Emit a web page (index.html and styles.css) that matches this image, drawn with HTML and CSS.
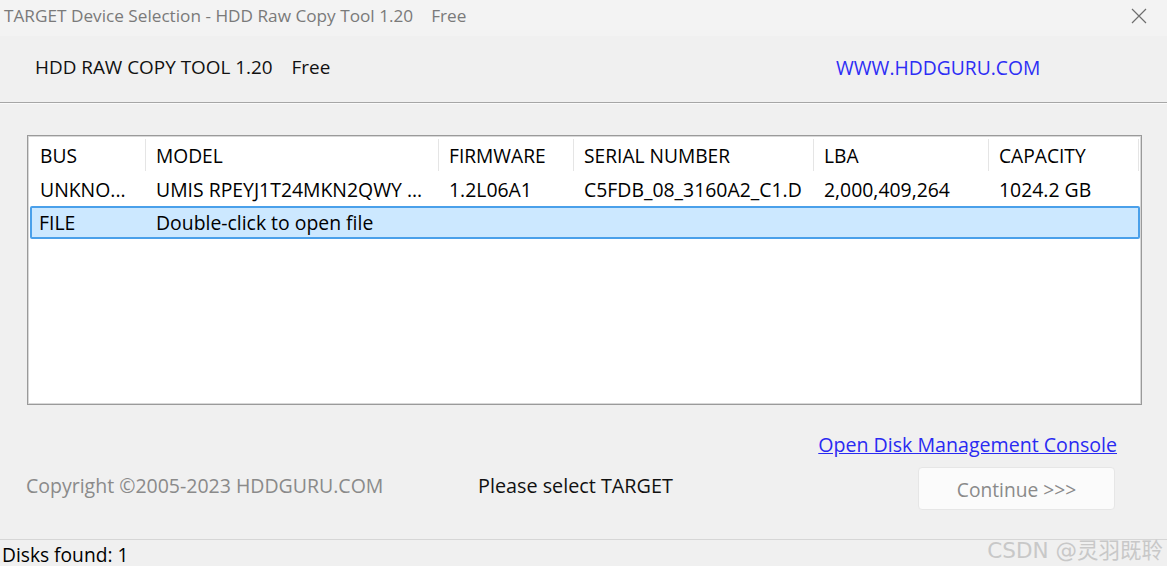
FILE: index.html
```html
<!DOCTYPE html>
<html>
<head>
<meta charset="utf-8">
<link rel="stylesheet" href="styles.css">
</head>
<body>
<div class="window">
  <div class="titlebar">
    <span class="title">TARGET Device Selection - HDD Raw Copy Tool 1.20<span class="tfree">Free</span></span>
    <svg class="close" width="16" height="16" viewBox="0 0 16 16"><path d="M1 1L15 15M15 1L1 15" stroke="#6e6e6e" stroke-width="1.2" fill="none"/></svg>
  </div>
  <div class="header">
    <span class="brand">HDD RAW COPY TOOL 1.20<span class="free">Free</span></span>
    <span class="site">WWW.HDDGURU.COM</span>
  </div>
  <div class="main">
    <div class="listbox">
      <div class="row head">
        <div class="c c1">BUS</div>
        <div class="c c2">MODEL</div>
        <div class="c c3">FIRMWARE</div>
        <div class="c c4">SERIAL NUMBER</div>
        <div class="c c5">LBA</div>
        <div class="c c6">CAPACITY</div>
      </div>
      <div class="row">
        <div class="c c1">UNKNO...</div>
        <div class="c c2">UMIS RPEYJ1T24MKN2QWY ...</div>
        <div class="c c3">1.2L06A1</div>
        <div class="c c4">C5FDB_08_3160A2_C1.D</div>
        <div class="c c5">2,000,409,264</div>
        <div class="c c6">1024.2 GB</div>
      </div>
      <div class="row sel">
        <div class="c c1">FILE</div>
        <div class="c cwide">Double-click to open file</div>
      </div>
    </div>
    <div class="linkrow"><a class="dmc">Open Disk Management Console</a></div>
    <div class="footrow">
      <span class="copy">Copyright ©2005-2023 HDDGURU.COM</span>
      <span class="prompt">Please select TARGET</span>
      <span class="btn">Continue &gt;&gt;&gt;</span>
    </div>
  </div>
  <div class="status">
    <span class="disks">Disks found: 1</span>
    <span class="mark">CSDN @灵羽既聆</span>
  </div>
</div>
</body>
</html>
```

FILE: styles.css
```css
* { box-sizing: border-box; }
html, body { margin: 0; padding: 0; }
body {
  width: 1167px;
  height: 566px;
  overflow: hidden;
  background: #f0f0f0;
  font-family: "Open Sans", "Noto Sans", "Noto Sans CJK SC", sans-serif;
  font-size: 19.2px;
  color: #000;
}
.window { width: 1167px; height: 566px; display: flex; flex-direction: column; }
.titlebar {
  height: 36px;
  flex: none;
  background: #f3f3f3;
  display: flex;
  align-items: center;
  justify-content: space-between;
  padding: 0 20px 6px 4px;
}
.title { color: #7a7a7a; font-size: 17.2px; }
.tfree { margin-left: 18px; }
.close { display: block; margin-top: 2px; }
.header {
  height: 67px;
  flex: none;
  display: flex;
  align-items: center;
  padding: 0 0 4px 35px;
  border-bottom: 1px solid #a6a6a6;
  box-shadow: 0 1px 0 #fafafa;
}
.brand { width: 801px; font-size: 18.9px; color: #111; }
.free { margin-left: 19px; }
.site { color: #2d2df5; font-size: 19.3px; }
.main { padding: 32px 25px 0 27px; flex: none; height: 436px; display: flex; flex-direction: column; }
.listbox {
  width: 1115px;
  height: 270px;
  background: #fff;
  border: 1px solid #9a9a9a;
  box-shadow: inset 0 0 0 1px #d8d8d8;
  padding: 1px 2px 2px;
}
.row { display: flex; height: 33px; align-items: center; font-size: 19.4px; }
.row.head { height: 36px; font-size: 19.2px; }
.c { padding-left: 10px; white-space: nowrap; overflow: hidden; height: 100%; display: flex; align-items: center; }
.head .c { border-right: 1px solid #e5e5e5; border-image: linear-gradient(to bottom, transparent 3px, #e5e5e5 3px, #e5e5e5 33px, transparent 33px) 1; }
.c1 { width: 116px; }
.c2 { width: 293px; }
.c3 { width: 135px; }
.c4 { width: 240px; }
.c5 { width: 175px; }
.c6 { width: 150px; }
.cwide { flex: 1; }
.row.sel {
  background: #cce8ff;
  border: 2px solid #4aa0ea;
  border-radius: 2px;
  margin-right: -1px;
}
.row.sel .c1 { width: 114px; padding-left: 7px; }
.linkrow { display: flex; justify-content: flex-end; padding-right: 25px; margin-top: 27px; height: 24px; align-items: center; }
.dmc { color: #2a2af2; text-decoration: underline; font-size: 19.6px; }
.footrow { display: flex; align-items: center; margin-top: 11px; height: 43px; }
.copy, .prompt { padding-bottom: 7px; }
.copy { color: #8a8a8a; width: 452px; margin-left: -1px; font-size: 19.5px; }
.prompt { color: #111; width: 440px; font-size: 19.8px; }
.btn {
  width: 197px;
  height: 43px;
  background: #fbfbfb;
  border: 1px solid #e6e6e6;
  border-radius: 4px;
  color: #8a8a8a;
  display: flex;
  align-items: center;
  justify-content: center;
  padding-top: 1px;
}
.status {
  height: 27px;
  flex: none;
  border-top: 1px solid #d6d6d6;
  display: flex;
  align-items: center;
  justify-content: space-between;
  padding: 4px 4px 0 2px;
}
.disks { line-height: 22px; }
.mark { color: #c8c8c8; font-size: 21.5px; line-height: 24px; margin-top: -8px; font-family: "DejaVu Sans", "Noto Sans CJK SC", sans-serif; }
```
